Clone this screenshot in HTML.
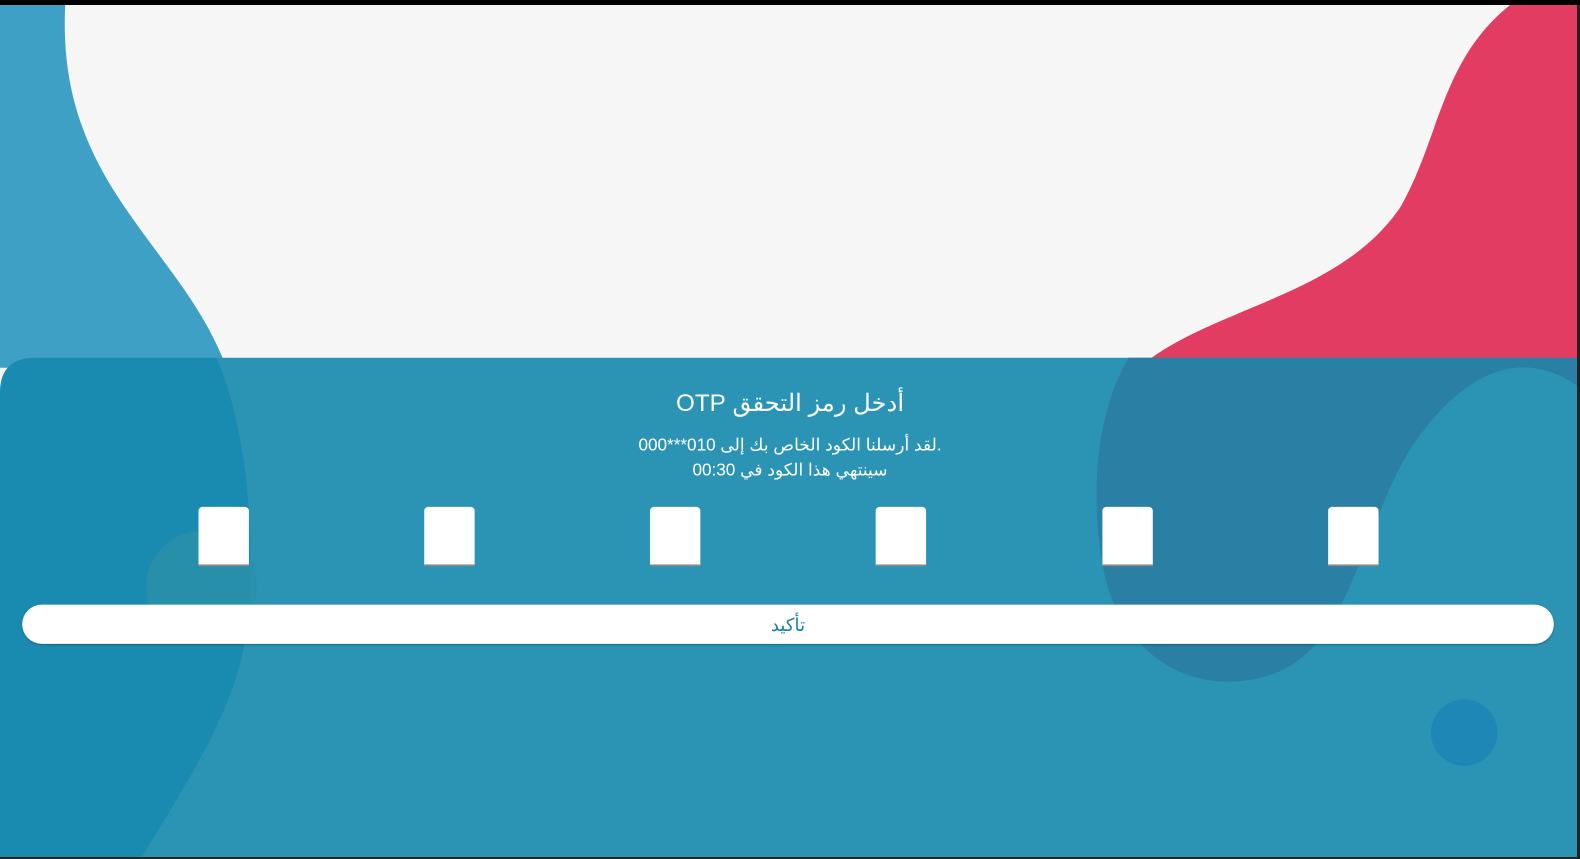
<!DOCTYPE html>
<html><head><meta charset="utf-8"><style>
html,body{margin:0;padding:0;width:1580px;height:859px;overflow:hidden;background:#222;font-family:"Liberation Sans","Noto Sans CJK SC",sans-serif}
#wrap{position:absolute;left:0;top:0;width:1577px;height:857px;overflow:hidden;background:#f6f6f6}
#in{position:absolute;left:0;top:0;width:1568px;height:852px;transform:scale(1.0077);transform-origin:0 0}
.box{position:absolute;top:503px;width:50px;height:57px;background:#fff;border-radius:4px 4px 0 0;border-bottom:2px solid #8a8a8a}
.t{position:absolute;left:0;width:1568px;text-align:center;color:#fff;direction:rtl}
</style></head><body>
<div id="wrap"><div id="in">
<svg width="1568" height="852" style="position:absolute;left:0;top:0">
<path d="M0 0 L65 0 C60 80 80 140 120 200 C160 260 200 300 225 365 L0 365 Z" fill="#3ea0c4"/>
<path d="M1505 0 L1568 0 L1568 365 L1130 365 C1200 305 1330 295 1390 205 C1430 135 1430 55 1505 0 Z" fill="#e23c63"/>
<path d="M0 390 Q0 355 35 355 L1533 355 Q1568 355 1568 390 L1568 852 L0 852 Z" fill="#2b94b5"/>
<path d="M0 390 Q0 355 35 355 L215 355 C245 425 255 535 245 625 C235 705 180 785 140 852 L0 852 Z" fill="#1a8bb0"/>
<path d="M1120 355 L1568 355 L1568 385 C1500 335 1440 385 1400 445 C1350 525 1340 645 1260 670 C1180 695 1110 645 1095 565 C1080 485 1090 405 1120 355 Z" fill="#2980a4"/>
<circle cx="200" cy="582" r="55" fill="#2a90a8" opacity="0.8"/>
<circle cx="1453" cy="727" r="33" fill="#1e87b5"/>
</svg>
<div class="t" style="top:386px;font-size:24px">أدخل رمز التحقق OTP</div>
<div class="t" style="top:429px;font-size:17px;line-height:25px">.لقد أرسلنا الكود الخاص بك إلى 010***000<br>سينتهي هذا الكود في 00:30</div>
<div class="box" style="left:197px"></div>
<div class="box" style="left:421px"></div>
<div class="box" style="left:645px"></div>
<div class="box" style="left:869px"></div>
<div class="box" style="left:1094px"></div>
<div class="box" style="left:1318px"></div>
<div style="position:absolute;left:22px;top:600px;width:1520px;height:39px;background:#fff;border-radius:20px;box-shadow:0 1px 2px rgba(0,0,0,.3);text-align:center;line-height:41px;color:#1a7fa6;font-size:18px">تأكيد</div>
</div></div>
<div style="position:absolute;left:0;top:0;width:1580px;height:5px;background:#000"></div>
</body></html>
